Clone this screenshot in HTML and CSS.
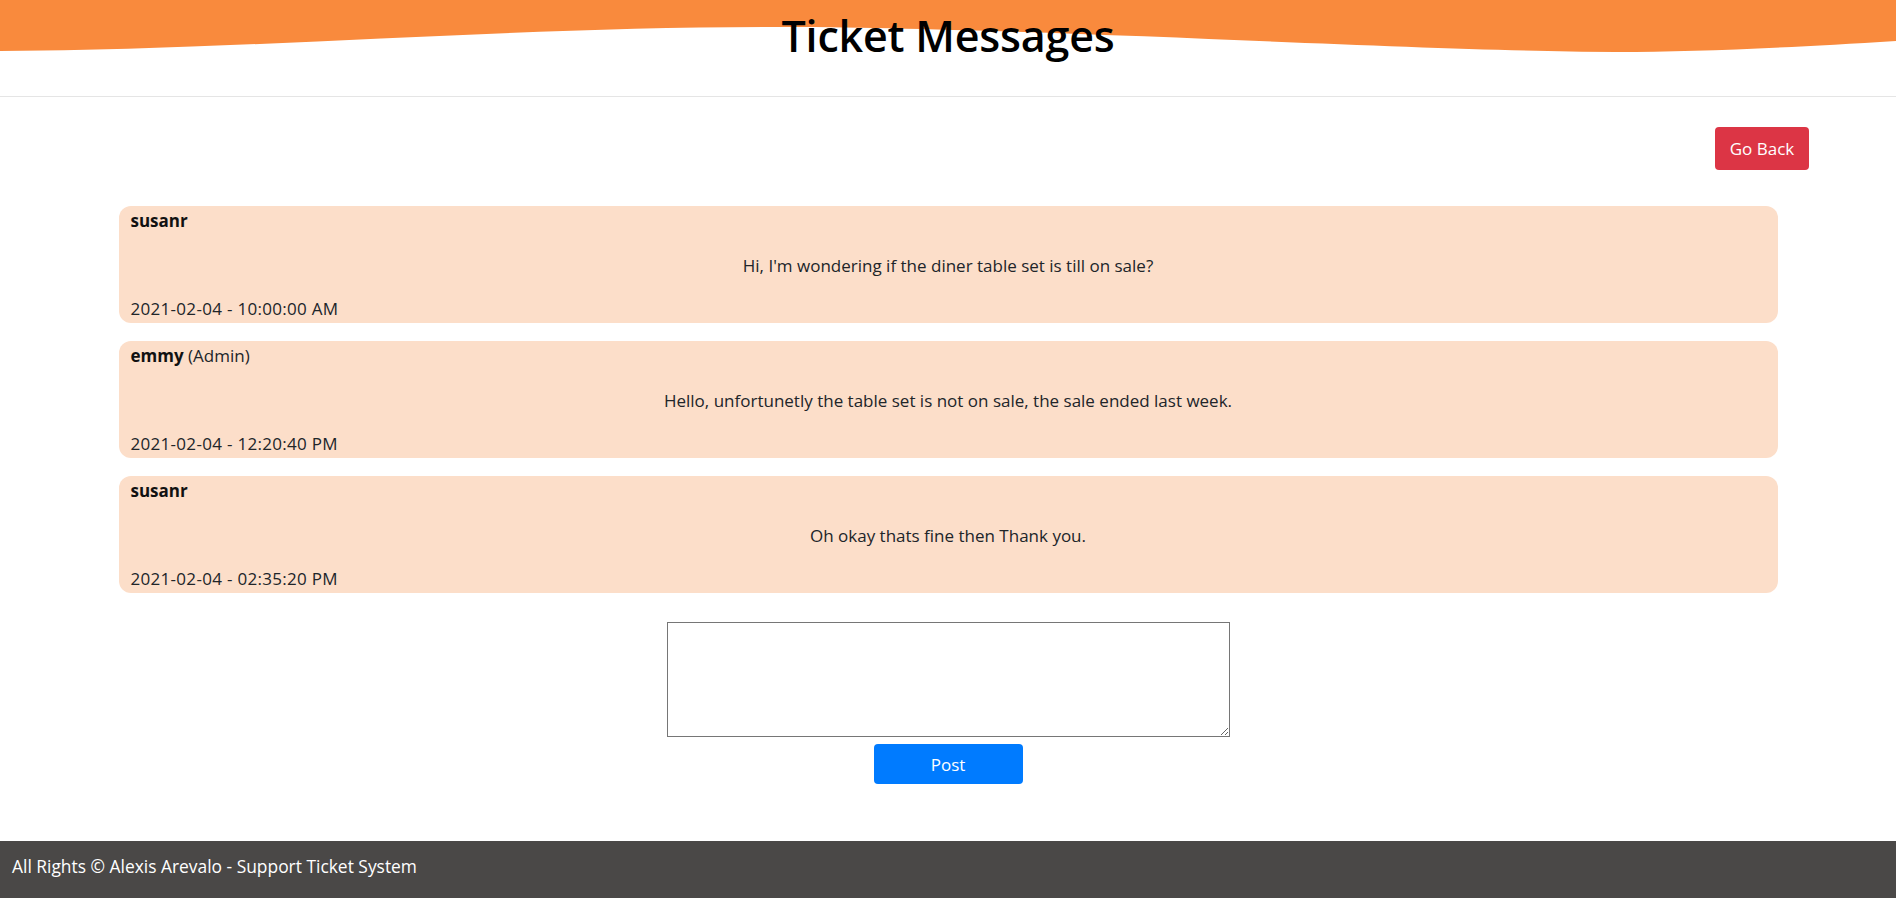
FILE: index.html
```html
<!DOCTYPE html>
<html lang="en">
<head>
<meta charset="utf-8">
<title>Ticket Messages</title>
<link rel="stylesheet" href="styles.css">
</head>
<body>
<div class="page">
  <header class="header">
    <svg class="wave" viewBox="0 0 1896 96" preserveAspectRatio="none" aria-hidden="true">
      <path d="M0,0 H1896 V41 C1750,50 1650,54 1548,51 C1350,47 1000,27 774,27 C500,27 250,50 0,51 Z" fill="#f98a3d"/>
    </svg>
    <h1 class="title">Ticket Messages</h1>
  </header>
  <main class="main">
    <div class="actions">
      <button class="btn btn-back" type="button">Go Back</button>
    </div>
    <section class="messages">
      <article class="msg">
        <div class="msg-author"><strong>susanr</strong></div>
        <p class="msg-text">Hi, I'm wondering if the diner table set is till on sale?</p>
        <div class="msg-date">2021-02-04 - 10:00:00 AM</div>
      </article>
      <article class="msg">
        <div class="msg-author"><strong>emmy</strong> (Admin)</div>
        <p class="msg-text">Hello, unfortunetly the table set is not on sale, the sale ended last week.</p>
        <div class="msg-date">2021-02-04 - 12:20:40 PM</div>
      </article>
      <article class="msg">
        <div class="msg-author"><strong>susanr</strong></div>
        <p class="msg-text">Oh okay thats fine then Thank you.</p>
        <div class="msg-date">2021-02-04 - 02:35:20 PM</div>
      </article>
    </section>
    <form class="reply">
      <textarea class="reply-input"></textarea>
      <button class="btn btn-post" type="button">Post</button>
    </form>
  </main>
  <footer class="footer">All Rights © Alexis Arevalo - Support Ticket System</footer>
</div>
</body>
</html>
```

FILE: styles.css
```css
* { box-sizing: border-box; }
html, body { margin: 0; padding: 0; }
body {
  font-family: "Open Sans", "Noto Sans", "DejaVu Sans", sans-serif;
  font-size: 17px;
  line-height: 27px;
  color: #212529;
  background: #fff;
}
.page {
  min-height: 100vh;
  display: flex;
  flex-direction: column;
}
.header {
  position: relative;
  height: 97px;
  border-bottom: 1px solid #e5e5e5;
  padding-top: 10px;
  text-align: center;
  overflow: hidden;
}
.wave {
  position: absolute;
  left: 0;
  top: 0;
  width: 100%;
  height: 96px;
}
.title {
  position: relative;
  margin: 0;
  font-size: 43px;
  line-height: 52px;
  font-weight: 600;
  color: #000;
  letter-spacing: -0.2px;
}
.main {
  flex: 1;
  display: flex;
  flex-direction: column;
}
.actions {
  display: flex;
  justify-content: flex-end;
  margin-top: 30px;
  padding-right: 87px;
}
.btn {
  font-family: inherit;
  font-size: 17px;
  color: #fff;
  border: none;
  border-radius: 4px;
  cursor: pointer;
  display: flex;
  align-items: center;
  justify-content: center;
  padding: 0;
}
.btn-back {
  width: 94px;
  height: 43px;
  background: #dc3545;
}
.messages {
  width: 87.5%;
  margin: 36px auto 0;
  display: flex;
  flex-direction: column;
  gap: 18px;
}
.msg {
  background: #fcdec9;
  border-radius: 12px;
  padding: 1px 12px 1px;
}
.msg-author strong { font-weight: 700; color: #111; }
.msg-text {
  margin: 18px 0 16px;
  text-align: center;
}
.msg-date { letter-spacing: 0.3px; }
.reply {
  display: flex;
  flex-direction: column;
  align-items: center;
  margin-top: 29px;
  gap: 7px;
}
.reply-input {
  width: 563px;
  height: 115px;
  border: 1px solid #767676;
  border-radius: 0;
  font-family: inherit;
}
.btn-post {
  width: 149px;
  height: 40px;
  background: #007bff;
}
.footer {
  margin-top: 57px;
  height: 57px;
  background: #4a4847;
  color: #fff;
  padding: 0 12px 6px;
  display: flex;
  align-items: center;
  font-size: 17.4px;
}
```
